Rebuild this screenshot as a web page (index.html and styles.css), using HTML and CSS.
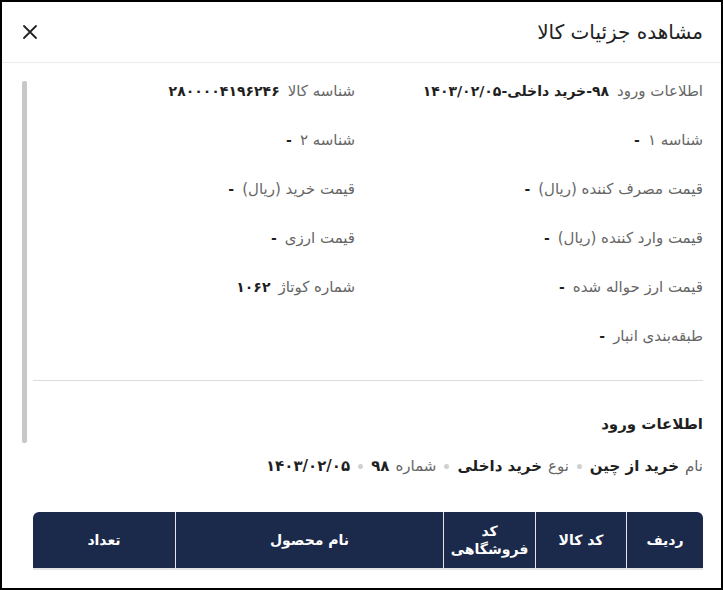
FILE: index.html
```html
<!DOCTYPE html>
<html lang="fa" dir="rtl">
<head>
<meta charset="utf-8">
<link rel="stylesheet" href="styles.css">
</head>
<body>
<div class="frame">
  <header class="head">
    <h1 class="title">مشاهده جزئیات کالا</h1>
    <button class="close" aria-label="بستن">
      <svg width="16" height="16" viewBox="0 0 16 16"><path d="M2 2L14 14M14 2L2 14" stroke="#222" stroke-width="1.8" stroke-linecap="round" fill="none"/></svg>
    </button>
  </header>
  <div class="body">
    <div class="content">
      <div class="grid">
        <div class="cell"><span class="lbl">اطلاعات ورود</span><span class="val">۹۸-خرید داخلی-۱۴۰۳/۰۲/۰۵</span></div>
        <div class="cell"><span class="lbl">شناسه کالا</span><span class="val">۲۸۰۰۰۰۴۱۹۶۲۴۶</span></div>
        <div class="cell"><span class="lbl">شناسه ۱</span><span class="val">-</span></div>
        <div class="cell"><span class="lbl">شناسه ۲</span><span class="val">-</span></div>
        <div class="cell"><span class="lbl">قیمت مصرف کننده (ریال)</span><span class="val">-</span></div>
        <div class="cell"><span class="lbl">قیمت خرید (ریال)</span><span class="val">-</span></div>
        <div class="cell"><span class="lbl">قیمت وارد کننده (ریال)</span><span class="val">-</span></div>
        <div class="cell"><span class="lbl">قیمت ارزی</span><span class="val">-</span></div>
        <div class="cell"><span class="lbl">قیمت ارز حواله شده</span><span class="val">-</span></div>
        <div class="cell"><span class="lbl">شماره کوتاژ</span><span class="val">۱۰۶۲</span></div>
        <div class="cell"><span class="lbl">طبقه‌بندی انبار</span><span class="val">-</span></div>
      </div>
      <hr class="divider">
      <h2 class="section">اطلاعات ورود</h2>
      <div class="meta">
        <span class="lbl">نام</span><span class="mval">خرید از چین</span><span class="dot"></span>
        <span class="lbl">نوع</span><span class="mval">خرید داخلی</span><span class="dot"></span>
        <span class="lbl">شماره</span><span class="mval">۹۸</span><span class="dot"></span>
        <span class="mval">۱۴۰۳/۰۲/۰۵</span>
      </div>
      <div class="tablewrap">
        <table class="tbl">
          <colgroup>
            <col class="c1"><col class="c2"><col class="c3"><col class="c4"><col>
          </colgroup>
          <thead>
            <tr>
              <th>ردیف</th>
              <th>کد کالا</th>
              <th>کد<br>فروشگاهی</th>
              <th>نام محصول</th>
              <th>تعداد</th>
            </tr>
          </thead>
        </table>
      </div>
    </div>
    <div class="scroll"><div class="thumb"></div></div>
  </div>
</div>
</body>
</html>
```
FILE: styles.css
```css
html, body { margin: 0; padding: 0; }
body {
  font-family: "DejaVu Sans", "Noto Sans", sans-serif;
  background: #fff;
  color: #222;
}
.frame {
  width: 723px;
  height: 590px;
  box-sizing: border-box;
  border: 2px solid #000;
  overflow: hidden;
  background: #fff;
}
.head {
  height: 60px;
  display: flex;
  align-items: center;
  justify-content: space-between;
  padding: 0 18px 0 20px;
  border-bottom: 1px solid #ececec;
}
.title {
  margin: 0;
  font-size: 20px;
  font-weight: 500;
  color: #222;
}
.close {
  border: 0;
  background: none;
  padding: 0;
  width: 16px;
  height: 16px;
  display: flex;
}
.body {
  display: flex;
  padding-top: 3px;
}
.content {
  flex: 1;
  min-width: 0;
  padding: 0 18px 0 6px;
}
.scroll {
  flex: none;
  width: 5px;
  padding: 15px 0 0 0;
  margin-left: 20px;
}
.thumb {
  width: 5px;
  height: 362px;
  background: #c8c8c8;
  border-radius: 2px;
}
.grid {
  display: grid;
  grid-template-columns: 348px 1fr;
  grid-auto-rows: 49px;
  align-items: center;
}
.cell {
  display: flex;
  align-items: baseline;
  gap: 8px;
  white-space: nowrap;
}
.lbl {
  font-size: 15px;
  color: #666;
}
.val {
  font-size: 14px;
  font-weight: 600;
  color: #1f1f1f;
}
.divider {
  border: 0;
  border-top: 1px solid #dcdcdc;
  margin: 20px 0 0 0;
}
.section {
  margin: 34px 0 0 0;
  font-size: 15px;
  font-weight: 700;
  color: #1f1f1f;
}
.meta {
  margin-top: 24px;
  display: flex;
  align-items: center;
  gap: 6px;
  white-space: nowrap;
}
.mval {
  font-size: 15px;
  font-weight: 600;
  color: #1f1f1f;
}
.dot {
  width: 5px;
  height: 5px;
  border-radius: 50%;
  background: #d0d0d0;
  margin: 0 2px;
}
.tablewrap {
  margin-top: 37px;
  border-radius: 6px 6px 0 0;
  overflow: hidden;
}
.tbl {
  width: 100%;
  table-layout: fixed;
  border-collapse: separate;
  border-spacing: 0;
}
.tbl th {
  background: #1b2a4b;
  color: #fff;
  font-size: 14px;
  font-weight: 700;
  height: 56px;
  padding: 0;
  line-height: 18px;
  border-left: 1px solid #e6e6e6;
  border-bottom: 2px solid #e4e4e4;
}
.tbl th:last-child { border-left: 0; }
.c1 { width: 77px; }
.c2 { width: 91px; }
.c3 { width: 92px; }
.c4 { width: 268px; }
```
